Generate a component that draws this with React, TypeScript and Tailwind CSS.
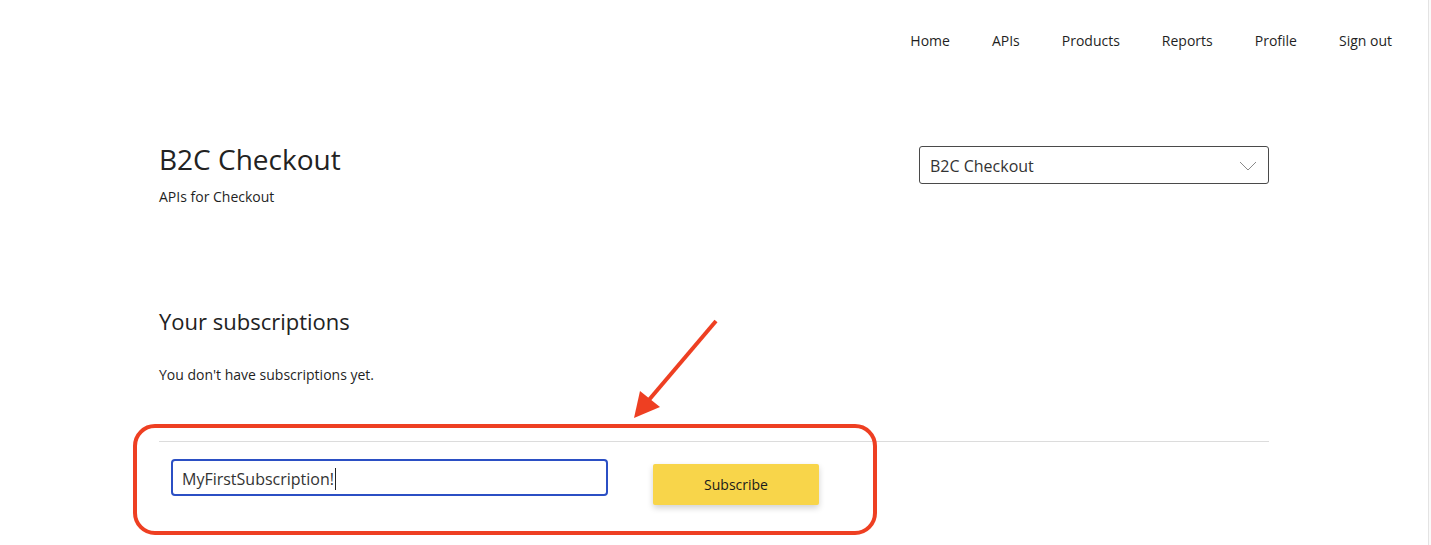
import { useState } from 'react';

const navItems = ['Home', 'APIs', 'Products', 'Reports', 'Profile', 'Sign out'];

export default function App() {
  const [name] = useState('MyFirstSubscription!');

  return (
    <div className="relative flex min-h-[545px] bg-white text-[#1f1f1f]" style={{ fontFamily: '"Open Sans", "Noto Sans", sans-serif' }}>
      <div className="flex-1">
        <nav className="flex h-[80px] items-center justify-end gap-[42px] pr-[36px] text-[14px]">
          {navItems.map((item) => (
            <a key={item} href="#" className="text-[#1f1f1f]">
              {item}
            </a>
          ))}
        </nav>

        <main className="mx-auto w-[1110px]">
          <section className="mt-[62px] flex items-start justify-between">
            <div>
              <h1 className="text-[28px] leading-[34px] text-[#222]">B2C Checkout</h1>
              <p className="mt-[11px] text-[14px] leading-[20px]">APIs for Checkout</p>
            </div>
            <button className="mt-[4px] flex h-[38px] w-[350px] items-center justify-between rounded-[3px] border border-[#4a4a4a] pl-[10px] pr-[11px] pt-[1px] text-[16px] text-[#333]">
              <span>B2C Checkout</span>
              <svg width="18" height="10" viewBox="0 0 18 10" fill="none">
                <path d="M1 1l8 8 8-8" stroke="#8a8a8a" strokeWidth="1" />
              </svg>
            </button>
          </section>

          <section className="mt-[100px]">
            <h2 className="text-[22px] leading-[28px] text-[#222]">Your subscriptions</h2>
            <p className="mt-[30px] text-[14px] leading-[20px]">You don't have subscriptions yet.</p>
          </section>

          <section className="mt-[56px] border-t border-[#dcdcdc] pt-[17px]">
            <div className="flex items-start gap-[45px] pl-[12px]">
              <div className="flex h-[37px] w-[437px] items-center rounded-[4px] border-2 border-[#2b4fc4] pl-[9px] pt-[2px] text-[16px] text-[#333]">
                <span>{name}</span>
                <span className="ml-[1px] h-[22px] w-px bg-[#222]" />
              </div>
              <button className="mt-[5px] h-[41px] w-[166px] rounded-[2px] bg-[#f8d54a] text-[14px] text-[#1a1a1a] shadow-[0_3px_6px_rgba(0,0,0,0.18)]">
                Subscribe
              </button>
            </div>
          </section>
        </main>
      </div>

      <div className="w-[3px] border-l border-[#e3e3e3] bg-[#fafafa]" />

      <svg className="pointer-events-none absolute left-0 top-0" width="1431" height="545" viewBox="0 0 1431 545">
        <rect x="135" y="426" width="740" height="107" rx="20" fill="none" stroke="#ee3f22" strokeWidth="4" />
        <line x1="716" y1="321" x2="648" y2="401" stroke="#ee3f22" strokeWidth="4" />
        <polygon points="634,418 640,391 660,407" fill="#ee3f22" />
      </svg>
    </div>
  );
}
